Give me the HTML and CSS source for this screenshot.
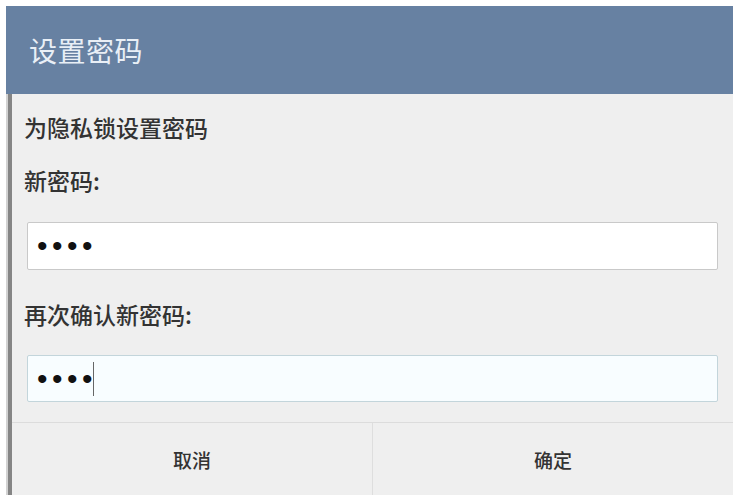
FILE: index.html
```html
<!DOCTYPE html>
<html lang="zh-CN">
<head>
<meta charset="utf-8">
<title>设置密码</title>
<link rel="stylesheet" href="styles.css">
</head>
<body>
  <div class="dialog">
    <div class="dialog-header">设置密码</div>
    <div class="dialog-body">
      <div class="content">
        <p class="hint">为隐私锁设置密码</p>
        <p class="label label-first">新密码:</p>
        <div class="field"><span class="dots">••••</span></div>
        <p class="label">再次确认新密码:</p>
        <div class="field field-focus"><span class="dots">••••</span><span class="caret"></span></div>
      </div>
      <div class="actions">
        <div class="btn">取消</div>
        <div class="btn btn-right">确定</div>
      </div>
    </div>
  </div>
</body>
</html>
```

FILE: styles.css
```css
html, body {
  margin: 0;
  padding: 0;
  background: #ffffff;
}

body {
  font-family: "Noto Sans CJK SC", "Noto Sans", "Liberation Sans", sans-serif;
  color: #333333;
}

.dialog {
  margin: 6px 0 0 6px;
  width: 727px;
}

.dialog-header {
  height: 88px;
  box-sizing: border-box;
  padding-left: 23px;
  display: flex;
  align-items: center;
  background: #6781a2;
  color: #e9eff6;
  font-size: 28px;
  letter-spacing: 0.5px;
}

/* dark edge down the left side of the panel */
.dialog-body {
  background: linear-gradient(to right, #d2d2d2 0 2px, #858585 2px 6px, #efefef 6px);
  height: 401px;
  display: flex;
  flex-direction: column;
}

.content {
  padding: 17px 15px 0 18px;
  flex: 1;
}

.hint, .label {
  margin: 0;
  font-size: 23px;
  line-height: 32px;
  font-weight: 500;
  color: #333333;
}

.label {
  margin-top: 28px;
}

.label-first {
  margin-top: 21px;
}

.field {
  margin: 26px 0 0 3px;
  height: 48px;
  box-sizing: border-box;
  border: 1px solid #c9c9c9;
  border-radius: 2px;
  background: #ffffff;
  display: flex;
  align-items: center;
  padding-left: 9px;
}

.field-focus {
  margin-top: 25px;
  height: 47px;
  border-color: #c3d5db;
  background: #f8fdff;
}

.dots {
  font-family: "Liberation Sans", sans-serif;
  font-size: 30px;
  line-height: 1;
  letter-spacing: 4.5px;
  color: #111111;
}

.caret {
  width: 1px;
  height: 34px;
  margin-left: -4px;
  background: #666666;
}

.actions {
  height: 72px;
  border-top: 1px solid #dcdcdc;
  display: flex;
  margin-left: 6px;
}

.btn {
  flex: 1;
  display: flex;
  align-items: center;
  justify-content: center;
  font-size: 19px;
  font-weight: 500;
  color: #333333;
}

.btn-right {
  border-left: 1px solid #dedede;
}
```
